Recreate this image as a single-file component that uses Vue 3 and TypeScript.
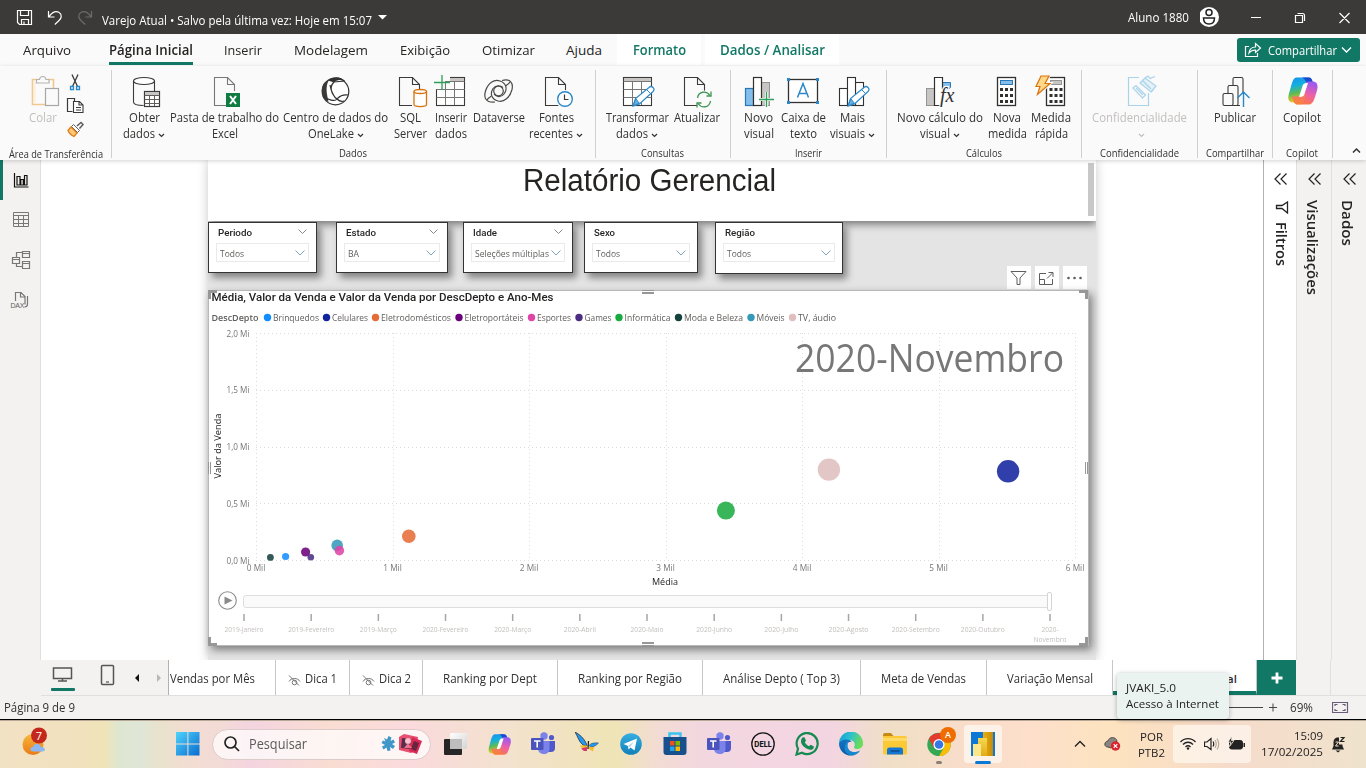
<script setup lang="ts">
import type { Directive } from 'vue'

// Condenses or widens a label so that it fills the given length in pixels.
const vFit: Directive<HTMLElement, number> = {
  mounted(el, binding) {
    if (!(el.textContent || '').trim()) return
    el.style.display = 'inline-block'
    const box = el.getBoundingClientRect()
    if (binding.arg === 'vertical') {
      el.style.height = binding.value + 'px'
      el.style.transformOrigin = '0 0'
      el.style.transform = `scaleY(${(binding.value / box.height).toFixed(4)})`
    } else {
      el.style.width = binding.value + 'px'
      el.style.transformOrigin = '0 0'
      el.style.transform = `scaleX(${(binding.value / box.width).toFixed(4)})`
    }
  },
}

interface Tab { text: string; w: number; gap: number; kind?: string }
const tabs: Tab[] = [
  { text: 'Arquivo', w: 48, gap: 23 },
  { text: 'Página Inicial', w: 84, gap: 38, kind: 'active' },
  { text: 'Inserir', w: 38, gap: 31 },
  { text: 'Modelagem', w: 74, gap: 32 },
  { text: 'Exibição', w: 50, gap: 32 },
  { text: 'Otimizar', w: 53, gap: 32 },
  { text: 'Ajuda', w: 36, gap: 31 },
  { text: 'Formato', w: 53, gap: 15, kind: 'context' },
  { text: 'Dados / Analisar', w: 105, gap: 4, kind: 'context' },
]

const page = (x: number, c = '#3b3a39') =>
  `<path d="M${x + 13} 31.5H${x}V3.5H${x + 13}L${x + 20} 10.5V17M${x + 13} 3.5V10.5H${x + 20}" fill="none" stroke="${c}" stroke-width="1.1"/>`
const grid = (x: number) =>
  `<rect x="${x}" y="3.5" width="28" height="28" fill="#fff" stroke="#3b3a39" stroke-width="1.1"/><path d="M${x + 0.5} 4h27v3.500h-27z" fill="#c8c6c4"/><path d="M${x} 7.500h28M${x} 15.500h28M${x} 23.500h28M${x + 9} 8v23M${x + 18} 8v23" stroke="#797775" fill="none"/>`
const pencil =
  '<path d="M14 32l2.500-7.500L30 13.500a2.800 2.800 0 0 1 4 4L20.500 30z" fill="#fff" stroke="#2b88c8" stroke-width="1.200"/><path d="M14.300 31.700l2.500-7 3.500 4.500z" fill="#69afe5" stroke="#2b88c8"/><path d="M27.500 15.500l4 4" stroke="#2b88c8"/>'
const dots = (x: number) => {
  let s = ''
  for (const r of [14, 20, 26]) for (const c of [0, 5, 10]) s += `<rect x="${x + c}" y="${r}" width="3" height="3" fill="#323130"/>`
  return s
}
const copilotArt = (id: string) => `<defs>
<linearGradient id="${id}a" x1="0" y1="0" x2=".2" y2="1"><stop offset="0" stop-color="#1a8ff0"/><stop offset=".35" stop-color="#12b0e0"/><stop offset=".65" stop-color="#5dbb58"/><stop offset="1" stop-color="#f5c71a"/></linearGradient>
<linearGradient id="${id}b" x1=".6" y1="0" x2=".3" y2="1"><stop offset="0" stop-color="#9a5bf0"/><stop offset=".5" stop-color="#ee5fa8"/><stop offset="1" stop-color="#fb7a3c"/></linearGradient></defs>
<path d="M9.500 1h10.500c3 0 4 1.500 5 5l1 4h-5c-3 0-4 1-5 4l-2.500 8c-.8 2.500-2 4-4 4H5.500C1 26 0 22 1.500 17L4 8C5.500 3.500 6.500 1 9.500 1z" fill="url(#${id}a)"/>
<path d="M16 1h5c3 0 3.600 2 4.500 5l1 4h-6c-2-5-3-8-6-9z" fill="#1b49cf"/>
<path d="M20.500 28H10.500c-3 0-4-1.500-5-5l-1-3h5c3 0 4-1 5-4l2.500-8c.8-2 2-3 4-3h4.500c4 0 5.500 4 4 9L27 22c-1.500 4-3 6-6.500 6z" fill="url(#${id}b)"/>
<path d="M5 20.500h5c2.500 0 3.500-1 4.500-4l1-3 3 5-2 6c-1 2.500-2 3.500-4 3.500h-2c-3 0-4.500-2-5.500-7.500z" fill="#f9863c" opacity=".55"/>
<path d="M11.500 20.500l3.500-11C15.800 7.200 17 6.500 19 6.500h1.500L17 17.500c-.8 2.300-2 3-4 3z" fill="#fff"/>`

const art: Record<string, string> = {
  obter: '<path d="M7.500 7v21c0 2 4 3.500 10 3.500M28.500 7v10" fill="none" stroke="#3b3a39" stroke-width="1.100"/><ellipse cx="18" cy="7" rx="10.500" ry="3.500" fill="#fff" stroke="#3b3a39" stroke-width="1.100"/><rect x="18.500" y="17.500" width="15" height="15" fill="#fff" stroke="#3b3a39" stroke-width="1.200"/><path d="M19 18h14v3H19z" fill="#c8c6c4"/><path d="M18.500 21.500h15M18.500 25.500h15M18.500 29.500h15M23.500 21v11M28.500 21v11" stroke="#605e5c" fill="none"/>',
  excel: page(8.5, '#797775') + '<rect x="20" y="19" width="14" height="14" fill="#107c41"/><path d="M24 22l6 8M30 22l-6 8" stroke="#fff" stroke-width="2"/>',
  lake: '<circle cx="18.500" cy="17.500" r="13.300" fill="#fff" stroke="#323130" stroke-width="1.200"/><path d="M11 6.500C16 2 24 2 28 7c-5-2-9-1-11 1.500z" fill="#323130"/><path d="M12 6C5 8 4 15 5.500 21c1 3 3 6 6 7-1-6-4-15 .5-22z" fill="#3b3a39"/><path d="M17 8c-5 5-3 12 3 17M17 8l11-1M13 11c1 8 6 14 7 14 2-2 4-5 11-4M6 22c5 4 12 6 14 3 2 2 4 3 7 2" fill="none" stroke="#323130" stroke-width="1.200"/>',
  sql: page(7.5) + '<rect x="20" y="15" width="16" height="18" fill="#fafafa"/><path d="M22 17.500v13c0 2.800 12.500 2.800 12.500 0v-13" fill="#fff" stroke="#d8730f" stroke-width="1.300"/><ellipse cx="28.250" cy="17.500" rx="6.250" ry="2" fill="#fff" stroke="#d8730f" stroke-width="1.300"/>',
  inserir: grid(4.5) + '<path d="M3 2h15v5H3z" fill="#fafafa"/><path d="M3 2h10v13H3z" fill="#fafafa"/><path d="M4.500 15.500h28" stroke="#797775"/><path d="M2 8.500h16M10 1v15" stroke="#2e9e58" stroke-width="1.300"/>',
  dataverse: '<g fill="none" stroke="#4b4a48" stroke-width="1.200"><path d="M15 28C6 29 3.500 24 5.500 17 8 9 14 5 20 7c6 2 8 8 4 13-3 4-8 3-10 0"/><path d="M22 6.500c8-2 11.500 2 10 9-2 8-8 13-14 11.500C12 25.500 9.500 20 13 14.500c3-4 8-3 10-1"/><circle cx="18.500" cy="17" r="4.800"/><path d="M7 26c2-3 3-2 4-4M30 8c-2 3-3 2-4 4"/></g>',
  fontes: page(7.5) + '<circle cx="27" cy="25" r="9" fill="#fafafa"/><circle cx="27" cy="25" r="7.300" fill="#fff" stroke="#2b88c8" stroke-width="1.400"/><path d="M26.500 20.500v5h4" fill="none" stroke="#3b3a39" stroke-width="1.200"/>',
  transformar: grid(4.5) + pencil,
  atualizar: page(6.5) + '<circle cx="26" cy="25.500" r="9" fill="#fafafa"/><path d="M19.500 24c1-7 9-7.500 12.500-2.500M32.500 27c-1 7-9 7.500-12.500 2.500" fill="none" stroke="#3e9455" stroke-width="1.300"/><path d="M33 17.500v4.500h-4.500M19 33.500V29h4.500" fill="none" stroke="#3e9455" stroke-width="1.300"/>',
  novo: '<rect x="5.500" y="14.500" width="8" height="17" fill="#83beec" stroke="#2b78b8" stroke-width="1.200"/><rect x="21.500" y="8.500" width="8" height="23" fill="#c8c6c4" stroke="#979593"/><rect x="13.500" y="3.500" width="8" height="28" fill="#fff" stroke="#323130" stroke-width="1.200"/><path d="M19 25.500h15M26.500 18v15" stroke="#fafafa" stroke-width="3"/><path d="M19 25.500h15M26.500 18v15" stroke="#2e9e58" stroke-width="1.300"/>',
  caixa: '<rect x="3.500" y="5.500" width="29" height="23" fill="#fff" stroke="#323130" stroke-width="1.300"/><g fill="#2b88c8"><rect x="2" y="4" width="3" height="3"/><rect x="31" y="4" width="3" height="3"/><rect x="2" y="27" width="3" height="3"/><rect x="31" y="27" width="3" height="3"/></g><path d="M12.500 23.500l5.500-14 5.500 14M14.300 19.500h7.400" fill="none" stroke="#2b88c8" stroke-width="1.500"/>',
  mais: '<g fill="#fff" stroke="#323130" stroke-width="1.100"><rect x="5.500" y="14.500" width="8" height="17"/><rect x="21.500" y="8.500" width="8" height="23"/><rect x="13.500" y="3.500" width="8" height="28"/></g>' + pencil,
  calculo: '<rect x="5.500" y="14.500" width="8" height="17" fill="#c8c6c4" stroke="#979593"/><path d="M21.500 8.500h8v5l-8 6z" fill="#83beec" stroke="#2b78b8"/><path d="M19 31.500h-5.500V3.500h8V15" fill="#fff" stroke="#323130" stroke-width="1.200"/><text x="19" y="28" font-family="Liberation Serif, serif" font-style="italic" font-size="20" stroke="#fafafa" stroke-width="2.500" paint-order="stroke" fill="#323130">fx</text>',
  nova: '<rect x="8.500" y="3.500" width="18" height="28" fill="#fff" stroke="#323130" stroke-width="1.300"/><rect x="11.500" y="6.500" width="12" height="4" fill="#83beec" stroke="#2b78b8"/>' + dots(11),
  medida: '<rect x="13.500" y="3.500" width="18" height="28" fill="#fff" stroke="#323130" stroke-width="1.300"/><rect x="17.500" y="6.500" width="11" height="4" fill="#c8c6c4" stroke="#979593"/>' + dots(16.5) + '<path d="M8 2h8l-4 7.500h5L5.500 20l2.500-8H3z" fill="#fcd888" stroke="#fafafa" stroke-width="3"/><path d="M8 2h8l-4 7.500h5L4.500 20.500l2.500-8H3z" fill="#fcd888" stroke="#d8730f" stroke-width="1.200"/>',
  conf: '<g fill="none" stroke="#a9d3ea" stroke-width="1.200"><path d="M18 3.500H7.500v28h20V19"/><path d="M12 14l3-2.500 9.500 9.500-3 3zM15 14l7 7"/><path d="M19 9l5-5 11 8-5 6zM24 4l3-2 2 2.500 5-2M30 18l3-3M22 7l8 8" fill="#e4f1f8"/></g>',
  publicar: '<g fill="#fafafa" stroke="#3b3a39" stroke-width="1.100"><path d="M17 12V5q0-1.500 1.500-1.500h7Q27 3.500 27 5v15"/><rect x="12" y="11.500" width="10" height="20" rx="1.500"/><rect x="7" y="19.500" width="10" height="12" rx="1.500"/></g><path d="M17 31.500h7" stroke="#3b3a39"/><path d="M27.500 33V18M21.500 24l6-6 6 6" fill="none" stroke="#2b88c8" stroke-width="1.400"/>',
  copilot: `<g transform="translate(3.500 2.500)">${copilotArt('rb')}</g>`,
}

interface Item { icon: string; w: number; lines: [string, number][]; arrow?: boolean; off?: boolean }
interface Group { w: number; pad: number; label: string; lw: number; items: Item[] }
const groups: Group[] = [
  { w: 484, pad: 8, label: 'Dados', lw: 28, items: [
    { icon: 'obter', w: 50, lines: [['Obter', 31], ['dados', 32]], arrow: true },
    { icon: 'excel', w: 111, lines: [['Pasta de trabalho do', 109], ['Excel', 26]] },
    { icon: 'lake', w: 111, lines: [['Centro de dados do', 105], ['OneLake', 46]], arrow: true },
    { icon: 'sql', w: 38, lines: [['SQL', 21], ['Server', 33]] },
    { icon: 'inserir', w: 43, lines: [['Inserir', 32], ['dados', 32]] },
    { icon: 'dataverse', w: 53, lines: [['Dataverse', 52]] },
    { icon: 'fontes', w: 62, lines: [['Fontes', 35], ['recentes', 44]], arrow: true },
  ] },
  { w: 135, pad: 8, label: 'Consultas', lw: 43, items: [
    { icon: 'transformar', w: 68, lines: [['Transformar', 63], ['dados', 32]], arrow: true },
    { icon: 'atualizar', w: 51, lines: [['Atualizar', 46]] },
  ] },
  { w: 156, pad: 10, label: 'Inserir', lw: 27, items: [
    { icon: 'novo', w: 37, lines: [['Novo', 29], ['visual', 30]] },
    { icon: 'caixa', w: 52, lines: [['Caixa de', 45], ['texto', 27]] },
    { icon: 'mais', w: 46, lines: [['Mais', 25], ['visuais', 35]], arrow: true },
  ] },
  { w: 195, pad: 7, label: 'Cálculos', lw: 36, items: [
    { icon: 'calculo', w: 93, lines: [['Novo cálculo do', 86], ['visual', 30]], arrow: true },
    { icon: 'nova', w: 42, lines: [['Nova', 28], ['medida', 39]] },
    { icon: 'medida', w: 46, lines: [['Medida', 40], ['rápida', 33]] },
  ] },
  { w: 116, pad: 1, label: 'Confidencialidade', lw: 79, items: [{ icon: 'conf', w: 115, lines: [['Confidencialidade', 95], ['', 0]], arrow: true, off: true }] },
  { w: 75, pad: 0, label: 'Compartilhar', lw: 58, items: [{ icon: 'publicar', w: 75, lines: [['Publicar', 42]] }] },
  { w: 60, pad: 0, label: 'Copilot', lw: 32, items: [{ icon: 'copilot', w: 60, lines: [['Copilot', 38]] }] },
]

const slicers = [
  { name: 'Periodo', nw: 34, value: 'Todos', vw: 24, w: 109, gap: 0, h: 51, head: true },
  { name: 'Estado', nw: 30, value: 'BA', vw: 11, w: 112, gap: 19, h: 51, head: true },
  { name: 'Idade', nw: 24, value: 'Seleções múltiplas', vw: 74, w: 110, gap: 15, h: 51, head: true },
  { name: 'Sexo', nw: 21, value: 'Todos', vw: 24, w: 114, gap: 11, h: 51, head: false },
  { name: 'Região', nw: 30, value: 'Todos', vw: 24, w: 128, gap: 17, h: 52, head: false },
]

const legend = [
  { n: 'Brinquedos', x: 273, w: 46, c: '#118dff' },
  { n: 'Celulares', x: 332, w: 36, c: '#12239e' },
  { n: 'Eletrodomésticos', x: 381, w: 70, c: '#e66c37' },
  { n: 'Eletroportáteis', x: 464.5, w: 59, c: '#6b007b' },
  { n: 'Esportes', x: 537, w: 34, c: '#e044a7' },
  { n: 'Games', x: 584.5, w: 27, c: '#4b2e83' },
  { n: 'Informática', x: 624.5, w: 46, c: '#1aab40' },
  { n: 'Moda e Beleza', x: 684, w: 59, c: '#15423d' },
  { n: 'Móveis', x: 756.5, w: 28, c: '#3599b8' },
  { n: 'TV, áudio', x: 798, w: 38, c: '#dfbfbf' },
]
const bubbles = [
  { x: 270.4, y: 557.4, r: 3.4, c: '#15423d' },
  { x: 285.6, y: 556.5, r: 3.6, c: '#118dff' },
  { x: 305.6, y: 552, r: 4.6, c: '#6b007b' },
  { x: 310.8, y: 557.3, r: 3.3, c: '#4b2e83' },
  { x: 337.2, y: 545.4, r: 5.8, c: '#3599b8' },
  { x: 339.4, y: 550.6, r: 4.8, c: '#e044a7' },
  { x: 408.8, y: 536.2, r: 6.8, c: '#e66c37' },
  { x: 725.9, y: 510.6, r: 9, c: '#1aab40' },
  { x: 828.9, y: 469.6, r: 11.2, c: '#dfbfbf' },
  { x: 1008.1, y: 471.3, r: 11.2, c: '#12239e' },
]
const yAxis = ['2,0 Mi', '1,5 Mi', '1,0 Mi', '0,5 Mi', '0,0 Mi']
const months = [
  ['2019-Janeiro', 39], ['2019-Fevereiro', 46], ['2019-Março', 37], ['2020-Fevereiro', 46], ['2020-Março', 37], ['2020-Abril', 32],
  ['2020-Maio', 33], ['2020-Junho', 36], ['2020-Julho', 34], ['2020-Agosto', 40], ['2020-Setembro', 48], ['2020-Outubro', 44], ['2020-', 17],
] as [string, number][]
const handles = [
  'M208 290h9v3h-6v6h-3z', 'M1079 290h9v9h-3v-6h-6z', 'M208 637h3v6h6v3h-9z', 'M1085 637h3v9h-9v-3h6z',
  'M642 290h12v1h-12zM642 292h12v2h-12z', 'M642 642h12v2h-12zM642 645h12v1h-12z', 'M208 462h1v12h-1zM210 462h1v12h-1z', 'M1085 462h1v12h-1zM1087 462h1v12h-1z',
]

const sheets = [
  { t: 'Vendas por Mês', w: 107, tw: 85, cls: 'first' },
  { t: 'Dica 1', w: 74, tw: 32, eye: true },
  { t: 'Dica 2', w: 73, tw: 32, eye: true },
  { t: 'Ranking por Dept', w: 135, tw: 94 },
  { t: 'Ranking por Região', w: 145, tw: 104 },
  { t: 'Análise Depto ( Top 3)', w: 158, tw: 117 },
  { t: 'Meta de Vendas', w: 126, tw: 85 },
  { t: 'Variação Mensal', w: 126, tw: 86 },
] as { t: string; w: number; tw: number; eye?: boolean; cls?: string }[]

const teams = '<circle cx="13" cy="4" r="3.700" fill="#7b83eb"/><circle cx="20.500" cy="5.500" r="2.600" fill="#5059c9"/><path d="M16 9h8v7a4 4 0 0 1-4 4h-3z" fill="#5059c9"/><path d="M7 9h11.500v8c0 3.500-2.500 5-5.500 5s-6-2-6-5z" fill="#7b83eb"/><rect x="0" y="6" width="12.500" height="12" rx="1" fill="#4b53bc"/><path d="M3 9h6.500M6.200 9v6.500" stroke="#fff" stroke-width="1.600"/>'
const apps = [
  { id: 'tasks', svg: '<defs><linearGradient id="tv" x1="0" y1="0" x2="1" y2="1"><stop stop-color="#fff"/><stop offset="1" stop-color="#d5d5d5"/></linearGradient></defs><rect x="1" y="7" width="18" height="16" rx="1" fill="#262626"/><rect x="7" y="1" width="17" height="16" rx="1" fill="url(#tv)"/><rect x="7" y="7" width="12" height="10" fill="#bdbdbd"/>' },
  { id: 'copilot', svg: `<g transform="translate(1 1.500) scale(.76)">${copilotArt('tb')}</g>` },
  { id: 'teams', svg: teams },
  { id: 'butterfly', svg: '<path d="M0 0c4 2 9 6 11.500 12l.5 2-4-1C4 10 3 5 0 0z" fill="#2499f2" stroke="#222" stroke-width=".7"/><path d="M14 13.500c2-2.500 5-3 9.500-2.500-2 2-4 4-8 4z" fill="#2499f2" stroke="#222" stroke-width=".4"/><path d="M12 13.500l-7 0c1 2.500 4 4 7 2z" fill="#f9b92a"/><path d="M6 16.500l6-1.500 0 4-3 0z" fill="#d6376b"/><path d="M14 15l5 0-1 4.500-4-2.500z" fill="#f9b92a"/><path d="M13.500 9l-.5 8" stroke="#222" stroke-width="1.200"/>' },
  { id: 'telegram', svg: '<defs><linearGradient id="tg" x2="0" y2="1"><stop stop-color="#37aee2"/><stop offset="1" stop-color="#1280b8"/></linearGradient></defs><circle cx="12" cy="12" r="10.800" fill="url(#tg)"/><path d="M4.500 12L18 6.500l-2.500 12-4-3-2 2-.5-3.500z" fill="#fff"/><path d="M9 14l6-4.500-4 5.500" fill="#a9d3ee"/>' },
  { id: 'store', svg: '<path d="M6.500 6V1.500h11V6" fill="none" stroke="#38c5f2" stroke-width="2.400"/><path d="M.5 5h23v15q0 3-3 3h-17q-3 0-3-3z" fill="#17508c"/><path d="M7 9h4.500v4.500H7z" fill="#f25022"/><path d="M12.500 9H17v4.500h-4.500z" fill="#7fba00"/><path d="M7 14.500h4.500V19H7z" fill="#1fa5ee"/><path d="M12.500 14.500H17V19h-4.500z" fill="#ffb900"/>' },
  { id: 'teams2', svg: teams },
  { id: 'dell', svg: '<circle cx="12" cy="12" r="11.200" fill="none" stroke="#161616" stroke-width="1.300"/><text x="12" y="14.500" text-anchor="middle" font-family="Inter, sans-serif" font-weight="800" font-size="7" textLength="17.500" lengthAdjust="spacingAndGlyphs" fill="#161616">DELL</text>' },
  { id: 'whatsapp', svg: '<path d="M1.500 22.500l1.500-5.800a10.500 10.500 0 1 1 4 4z" fill="none" stroke="#168a52" stroke-width="2.200"/><path d="M7.500 5.500l2-.3 1.500 3.500-1.200 1.600c1 1.900 2.300 3 4.200 3.900l1.700-1.400 3.200 1.600c.3 2.500-2 3.600-3.800 3.400C10 17 6 12.500 6 9.500c0-1.600.6-3.200 1.500-4z" fill="#168a52"/>' },
  { id: 'edge', svg: '<defs><linearGradient id="eg" x1="0" y1="0" x2="1" y2=".3"><stop stop-color="#159bd5"/><stop offset=".5" stop-color="#2bc0d1"/><stop offset="1" stop-color="#6bdc5a"/></linearGradient><linearGradient id="eh" x2="0" y2="1"><stop stop-color="#1274c4"/><stop offset="1" stop-color="#0c59a4"/></linearGradient></defs><path d="M0 12a12 12 0 0 1 24-1c.5 4-3 6-6 6-2.500 0-3.500-1.500-2.500-3 1-3-1-6-6-6C5 8 1 10 0 12z" fill="url(#eg)"/><path d="M0 12c1-5 10-6 13-2-5-1-6 4-3 8 2 2.500 7 3 11 .500C19 22 15 23.500 12 23.500A12 12 0 0 1 0 12z" fill="url(#eh)"/><path d="M9 13c-1 7 6 9 12 5.500-2 3.500-5 5-8 5C5 23 3 14 9 9z" fill="#1b9de2" opacity=".65"/>' },
  { id: 'folder', svg: '<path d="M0 3q0-2 2-2h6l2.500 3H0z" fill="#c58a12"/><path d="M0 4h22q2 0 2 2v15q0 1.500-1.500 1.500h-21Q0 22.500 0 21z" fill="#fbc936"/><path d="M0 6h24v3H0z" fill="#ffda64"/><path d="M4 22.500V18q0-2.500 2.500-2.500h11q2.500 0 2.500 2.500v4.500z" fill="#1477d2"/><path d="M7.500 19h9" stroke="#0c4f94" stroke-width="1.600"/>' },
  { id: 'chrome', svg: '<g transform="translate(0 1)"><circle cx="12" cy="11.500" r="11.700" fill="#34a853"/><path d="M12 11.500L1.900 5.700A11.700 11.700 0 0 1 22.100 5.700z" fill="#e33b2e"/><path d="M1.900 5.700L7 15l5-3.500 3-5.500h7L19 2z" fill="#e33b2e"/><path d="M12 23.200l5-9 .5-8h5A11.700 11.700 0 0 1 12 23.200z" fill="#fbbc05"/><circle cx="12" cy="11.500" r="5.600" fill="#fff"/><circle cx="12" cy="11.500" r="4.300" fill="#3578e5"/></g>' },
  { id: 'powerbi', svg: '<defs><linearGradient id="pa" x2="1"><stop stop-color="#e8b010"/><stop offset="1" stop-color="#c98a08"/></linearGradient><linearGradient id="pb" x2="0" y2="1"><stop stop-color="#f6d751"/><stop offset="1" stop-color="#e2ac16"/></linearGradient></defs><rect width="24" height="24" fill="#0a78d4"/><rect x="12" y="0" width="10" height="24" fill="url(#pa)"/><rect x="7" y="6" width="9" height="18" fill="url(#pb)"/><rect x="2" y="12" width="8" height="12" fill="#fbe68a"/>' },
]
</script>

<template>
  <div class="desktop">
    <header class="titlebar">
      <svg class="t-icons" width="102" height="34" fill="none" stroke="#fff" stroke-width="1.200">
        <path d="M17.500 10.500h14v14h-12l-2-2zM20.500 10.500v5h8v-5M21.500 24.500v-5h7v5M24 21.500v3" />
        <path d="M48.500 11v6h6M48.800 16.800c3-4 7-6 10-4.500 3.500 2 3 6 0 8.500l-4 3.700" />
        <path d="M91.500 11v6h-6M91.200 16.800c-3-4-7-6-10-4.500-3.500 2-3 6 0 8.500l4 3.700" stroke="#6e6c6a" />
      </svg>
      <span v-fit="270" class="t-name">Varejo Atual • Salvo pela última vez: Hoje em 15:07</span>
      <svg class="t-caret" width="10" height="34"><path d="M0 15h9L4.500 19.500z" fill="#fff" /></svg>
      <span class="grow"></span>
      <span v-fit="61" class="t-user">Aluno 1880</span>
      <svg width="166" height="34" fill="none" stroke="#fff" stroke-width="1.200">
        <circle cx="9" cy="17" r="10" fill="#fff" stroke="none" />
        <circle cx="9" cy="12.500" r="3" stroke="#222" stroke-width="1.500" />
        <path d="M3.500 18h11c0 4-2 6-5.500 6s-5.500-2-5.500-6z" stroke="#222" stroke-width="1.500" />
        <path d="M51 17.500h10M95.500 15.500h7v7h-7zM97.500 13.500h5q2 0 2 2v5.500M139.500 13l10 10M149.500 13l-10 10" />
      </svg>
    </header>

    <nav class="tabs">
      <div v-for="t in tabs" :key="t.text" class="tab" :class="t.kind" :style="{ marginLeft: t.gap + 'px' }">
        <span v-fit="t.w">{{ t.text }}</span>
      </div>
      <span class="grow"></span>
      <button class="share">
        <svg width="18" height="18" fill="none" stroke="#fff" stroke-width="1.200"><path d="M5 5.500H1.500v10h12V12M5 12c.5-4 3-6 6.500-6V2.500L16.500 7l-5 4.500V9C8.500 9 6.500 10 5 12z" /></svg>
        <span v-fit="69">Compartilhar</span>
        <svg width="11" height="8" fill="none" stroke="#fff" stroke-width="1.300"><path d="M1 1.500l4.500 4.500L10 1.500" /></svg>
      </button>
    </nav>

    <section class="ribbon">
      <div class="group clip">
        <div class="g-items">
          <svg width="110" height="74" fill="none">
            <path d="M38 5.500h-5.500V30.500H45M48 5.500h5.500V15" stroke="#f2c891" stroke-width="1.600" />
            <path d="M34.500 8v20.500" stroke="#fbeedb" stroke-width="2" />
            <path d="M36.500 9V5.500h3c.5-4 6-4 6.500 0h3V9z" fill="#fafafa" stroke="#b5b3b1" stroke-width="1.200" />
            <rect x="45.500" y="14.500" width="13" height="17" fill="#fafafa" stroke="#a9a7a5" stroke-width="1.200" />
            <path d="M72 .5l5.500 12M78 .5l-5.500 12" stroke="#3b3a39" stroke-width="1.300" />
            <path d="M70.500 12.500h3v3h-3zM76.500 12.500h3v3h-3z" stroke="#2b88c8" stroke-width="1.300" />
            <path d="M72.500 37.500h-5v-13h7v3" stroke="#3b3a39" stroke-width="1.200" />
            <path d="M73.500 27.500h6l3.500 3.500v7.500h-9.500zM79 27.500V31h4M76 33.500h5M76 36h5" fill="#fff" stroke="#3b3a39" stroke-width="1.100" />
            <path d="M77 52l4-3.500 2 2-3.500 4" stroke="#605e5c" stroke-width="1.500" />
            <path d="M73.500 50.500l6 6-2 2-6-6z" fill="#fff" stroke="#605e5c" />
            <path d="M71 53l6 6-3 3.500c-2-1-5-3-6-6z" fill="#fbc978" stroke="#e07c1c" stroke-width="1.300" />
          </svg>
          <span class="colar" v-fit="28">Colar</span>
        </div>
        <div class="g-label"><span v-fit="94">Área de Transferência</span></div>
      </div>
      <div v-for="g in groups" :key="g.label" class="group" :style="{ width: g.w + 'px' }">
        <div class="g-items" :style="{ paddingLeft: g.pad + 'px' }">
          <div v-for="it in g.items" :key="it.icon" class="item" :class="{ off: it.off }" :style="{ width: it.w + 'px' }">
            <svg :width="36 + (it.w % 2)" height="36" v-html="art[it.icon]"></svg>
            <div v-for="(l, i) in it.lines" :key="i" class="line">
              <span v-fit="l[1]">{{ l[0] }}</span>
              <svg v-if="it.arrow && i === 1" class="arr" width="7" height="5" fill="none" stroke="currentColor" stroke-width="1.200"><path d="M1 1l2.500 2.500L6 1" /></svg>
            </div>
          </div>
        </div>
        <div class="g-label"><span v-fit="g.lw">{{ g.label }}</span></div>
      </div>
      <svg class="collapse" width="34" height="26" fill="none" stroke="#323130" stroke-width="1.500"><path d="M21 18.500l3.500-3.500 3.500 3.500" /></svg>
    </section>

    <main class="work">
      <aside class="rail">
        <svg width="40" height="160" viewBox="0 160 40 160" fill="none" stroke="#797775">
          <g stroke="#111" stroke-width="1.200"><path d="M14.500 173v14h14M17 176.500h3v8.500h-3zM20.800 179.500h2.500v5.500h-2.500zM24.500 175.500h2.500v9.500h-2.500z" /></g>
          <path d="M13.500 212.500h15v14h-15zM13.500 215.500h15M13.500 219.500h15M13.500 223.500h15M18.500 215v12M23.500 215v12" />
          <path d="M12.500 257.500h7v6h-7zM12.500 259.500h7M22.500 251.500h7v6h-7zM22.500 253.500h7M22.500 261.500h7v7h-7zM22.500 263.500h7M16.500 257v-4.500h6M16.500 264v2.500h6" stroke-width="1.200" />
          <path d="M15.500 301v-8.500h5.500l4 4v8M20.500 292.500v4.500h4.500M27.500 296v8q0 3-3 3" stroke-width="1.200" />
          <text x="10.500" y="307.500" font-size="7" textLength="14" fill="#605e5c" stroke="none" font-family="Liberation Sans, sans-serif">DAX</text>
        </svg>
      </aside>

      <div class="stage">
        <div class="report">
          <h1><span v-fit="253">Relatório Gerencial</span><i class="scroll"></i></h1>
          <div class="slicers">
            <div v-for="s in slicers" :key="s.name" class="slicer" :style="{ width: s.w + 'px', height: s.h + 'px', marginLeft: s.gap + 'px' }">
              <div class="s-head">
                <span v-fit="s.nw">{{ s.name }}</span>
                <svg v-if="s.head" width="9" height="6" fill="none" stroke="#8a8886"><path d="M.5.5l4 4 4-4" /></svg>
              </div>
              <div class="s-box">
                <span v-fit="s.vw">{{ s.value }}</span>
                <svg width="10" height="6" fill="none" stroke="#7fa4ba"><path d="M.5.5L5 5 9.500.5" /></svg>
              </div>
            </div>
          </div>
          <div class="tools">
            <svg width="24" height="23" fill="none" stroke="#605e5c"><path d="M4 5.500h15l-6 6.500v6.500h-3V12z" /></svg>
            <svg width="24" height="23" fill="none" stroke="#605e5c"><path d="M11 7.500H4.500v11h13V13M12 12.500l5.500-5.500M13.500 6.500H18V11M4.500 13.500h5v5" /></svg>
            <svg width="24" height="23" fill="#605e5c"><circle cx="5.500" cy="12" r="1.300" /><circle cx="11.500" cy="12" r="1.300" /><circle cx="17.500" cy="12" r="1.300" /></svg>
          </div>
          <svg class="chart" width="881" height="356" viewBox="208 290 881 356">
            <path d="M208.500 290.500h880v355h-880z" fill="#fff" stroke="#b8b8b8" />
            <text x="211.500" y="301" class="c-title" textLength="342" lengthAdjust="spacingAndGlyphs">Média, Valor da Venda e Valor da Venda por DescDepto e Ano-Mes</text>
            <text x="211.500" y="321" class="c-leg bold" textLength="47" lengthAdjust="spacingAndGlyphs">DescDepto</text>
            <g v-for="l in legend" :key="l.n">
              <circle :cx="l.x - 5.5" cy="317.500" r="3.700" :fill="l.c" />
              <text :x="l.x" y="321" class="c-leg" :textLength="l.w" lengthAdjust="spacingAndGlyphs">{{ l.n }}</text>
            </g>
            <g stroke="#dcdcdc" stroke-dasharray="1 3" fill="none">
              <path v-for="i in 5" :key="'h' + i" :d="`M256 ${Math.round(333 + (i - 1) * 56.8) + 0.5}H1075`" />
              <path v-for="i in 7" :key="'v' + i" :d="`M${Math.round(256 + (i - 1) * 136.5) + 0.5} 333V560`" />
            </g>
            <text v-for="(y, i) in yAxis" :key="y" x="249.500" :y="336.5 + i * 56.8" class="c-ax" text-anchor="end" textLength="23" lengthAdjust="spacingAndGlyphs">{{ y }}</text>
            <text v-for="i in 7" :key="'x' + i" :x="256 + (i - 1) * 136.5" y="571" class="c-ax" text-anchor="middle" textLength="18.500" lengthAdjust="spacingAndGlyphs">{{ i - 1 }} Mil</text>
            <text x="665" y="584.500" class="c-name" text-anchor="middle" textLength="26" lengthAdjust="spacingAndGlyphs">Média</text>
            <text transform="translate(220.500 446) rotate(-90)" class="c-name" text-anchor="middle" textLength="65" lengthAdjust="spacingAndGlyphs">Valor da Venda</text>
            <text x="795" y="372" class="c-big" textLength="269" lengthAdjust="spacingAndGlyphs">2020-Novembro</text>
            <circle v-for="b in bubbles" :key="b.x" :cx="b.x" :cy="b.y" :r="b.r" :fill="b.c" fill-opacity=".87" />
            <circle cx="227.500" cy="600.500" r="8.800" fill="#fff" stroke="#8a8a8a" stroke-width="1.100" />
            <path d="M224.500 596.500l8 4-8 4z" fill="#8a8a8a" />
            <rect x="243.500" y="595.500" width="808" height="12" rx="2.500" fill="#fafafa" stroke="#dedede" />
            <rect x="1047.500" y="592.500" width="4" height="18" rx="1.500" fill="#fff" stroke="#d4d4d4" />
            <g v-for="(m, i) in months" :key="i">
              <path :d="`M${244 + i * 67.17} 614v7`" stroke="#a6a6a6" stroke-width="1.500" />
              <text :x="244 + i * 67.17" y="632" class="c-mon" text-anchor="middle" :textLength="m[1]" lengthAdjust="spacingAndGlyphs">{{ m[0] }}</text>
            </g>
            <text x="1050" y="641.500" class="c-mon" text-anchor="middle" textLength="33" lengthAdjust="spacingAndGlyphs">Novembro</text>
            <path v-for="h in handles" :key="h" :d="h" fill="#979797" />
          </svg>
        </div>
      </div>

      <aside class="pane filt">
        <svg width="14" height="12" fill="none" stroke="#222" stroke-width="1.200"><path d="M6.500.5L1 6l5.500 5.500M12.500.5L7 6l5.500 5.500" /></svg>
        <svg class="fun" width="14" height="13" fill="none" stroke="#222" stroke-width="1.300"><path d="M12.500 1v11L7 7.500H1.500v-3H7z" /></svg>
        <span v-fit:vertical="44">Filtros</span>
      </aside>
      <aside class="pane">
        <svg width="14" height="12" fill="none" stroke="#222" stroke-width="1.200"><path d="M6.500.5L1 6l5.500 5.500M12.500.5L7 6l5.500 5.500" /></svg>
        <span v-fit:vertical="95">Visualizações</span>
      </aside>
      <aside class="pane">
        <svg width="14" height="12" fill="none" stroke="#222" stroke-width="1.200"><path d="M6.500.5L1 6l5.500 5.500M12.500.5L7 6l5.500 5.500" /></svg>
        <span v-fit:vertical="46">Dados</span>
      </aside>
    </main>

    <div class="sheets">
      <div class="sh-left">
        <svg width="128" height="35" fill="none">
          <rect x="12.500" y="8" width="18" height="10.500" stroke="#555" stroke-width="1.500" />
          <path d="M21.500 18v2.500M17 21h9" stroke="#555" stroke-width="1.500" />
          <rect x="10" y="28" width="24" height="3" rx="1" fill="#117865" />
          <rect x="60.500" y="5.500" width="12" height="19" rx="1" stroke="#555" stroke-width="1.500" />
          <path d="M65 22h3" stroke="#555" stroke-width="1.200" />
          <path d="M98 14v8l-4-4z" fill="#111" /><path d="M116 14v8l4-4z" fill="#b9b7b5" />
        </svg>
      </div>
      <div v-for="s in sheets" :key="s.t" class="sheet" :class="s.cls" :style="{ width: s.w + 'px' }">
        <svg v-if="s.eye" width="13" height="13" fill="none" stroke="#797775"><path d="M1 7.500c2-4 9-4 11 0M1 1.500l10 10" /><circle cx="6.500" cy="8.500" r="2.300" /></svg>
        <span v-fit="s.tw">{{ s.t }}</span>
      </div>
      <div class="sheet current"><span>al</span></div>
      <div class="add"><svg width="12" height="12"><path d="M6 .5v11M.5 6h11" stroke="#fff" stroke-width="2.800" /></svg></div>
      <div class="sh-r1"></div>
      <div class="sh-r2"></div>
    </div>

    <footer class="status">
      <span v-fit="71">Página 9 de 9</span>
      <span class="grow"></span>
      <svg width="60" height="23" fill="none" stroke="#444"><path d="M0 11.500h34M40 11.500h8M44 7.500v8" /></svg>
      <span class="zoom" v-fit="23">69%</span>
      <svg width="34" height="23" fill="none" stroke="#6b5b78" stroke-width="1.200"><path d="M.5 6.500h15v10H.5z" /><path d="M3 10V8.500h2.500M10.500 8.500H13V10M3 13v1.500h2.500M10.500 14.500H13V13" /></svg>
    </footer>

    <div class="taskbar">
      <div class="weather">
        <svg width="30" height="34"><defs><linearGradient id="sun" x1="0" y1="0" x2="0" y2="1"><stop stop-color="#f6b73c" /><stop offset="1" stop-color="#ea7b16" /></linearGradient></defs>
          <circle cx="11" cy="17.500" r="10.500" fill="url(#sun)" /><path d="M11 24.500c-3.500 0-3.500-4.500 0-4.500 1-4.500 7-4.500 8 0 5 0 5 4.500 1.500 4.500z" fill="#8db7f2" />
          <circle cx="17" cy="8.500" r="8" fill="#c4281c" /><text x="17" y="12.500" text-anchor="middle" font-size="11" fill="#fff">7</text></svg>
      </div>
      <svg class="win" width="24" height="24"><defs><linearGradient id="wn" x1="0" y1="0" x2="24" y2="24" gradientUnits="userSpaceOnUse"><stop stop-color="#50d4fb" /><stop offset="1" stop-color="#0669cf" /></linearGradient></defs><path d="M0 0h11.400v11.400H0zM12.400 0H23.500v11.400H12.400zM0 12.400h11.400v11H0zM12.400 12.400h11.100v11H12.400z" fill="url(#wn)" /></svg>
      <div class="search">
        <svg width="16" height="16" fill="none" stroke="#222" stroke-width="1.700"><circle cx="6.500" cy="6.500" r="5.500" /><path d="M10.500 10.500l4.500 4.500" /></svg>
        <span class="s-text" v-fit="58">Pesquisar</span>
        <span class="grow"></span>
        <svg width="44" height="22"><path d="M4 5l3 1.500L8.500 3l3 1.500L10.500 8l3-1.500 1.500 3-3 1.500 3 2-2 3-3-2 .5 3.500-3 .5-1-3.500-3 2-1.500-3 3-1.500L1.500 10 3 7.500l2.500 1z" fill="#3f97c9" />
          <path d="M19 4l5-3 14 3-2 14-5 2-12-3z" fill="#e94f70" /><path d="M22 5l9 1-1 10-9-1z" fill="#5a2b4d" /><path d="M32 4l10 4-5 13-8-3z" fill="#d72a56" /><path d="M34 8l5 2-3 8-5-2z" fill="#692440" /><circle cx="28" cy="8" r="3" fill="#f8c2cb" /><path d="M24 15l4-5 4 5z" fill="#e9738b" /></svg>
      </div>
      <div v-for="a in apps" :key="a.id" class="app" :class="a.id">
        <svg width="24" height="24" v-html="a.svg"></svg>
        <b v-if="a.id === 'chrome'" class="badge">A</b>
      </div>
      <span class="grow"></span>
      <svg class="up" width="12" height="8" fill="none" stroke="#222" stroke-width="1.400"><path d="M1 6.500l5-5 5 5" /></svg>
      <svg class="cloud" width="18" height="16"><path d="M4 11C-.5 11 0 5.500 4 5 5 .5 12 .5 13 5l-6 7z" fill="#8a8580" stroke="#4d4a48" /><circle cx="11.500" cy="10" r="4.700" fill="#d9232e" /><path d="M9.700 8.200l3.600 3.600M13.300 8.200l-3.600 3.600" stroke="#fff" stroke-width="1.200" /></svg>
      <div class="lang"><span v-fit="23">POR</span><span v-fit="27">PTB2</span></div>
      <div class="net">
        <svg width="16" height="14" fill="none" stroke="#222" stroke-width="1.300"><path d="M.5 5c4-4.500 11-4.500 15 0M3 7.500c3-3 7-3 10 0M5.500 10c1.500-1.500 3.500-1.500 5 0" /><circle cx="8" cy="11.500" r="1.200" fill="#222" stroke="none" /></svg>
        <svg width="16" height="14" fill="none" stroke="#222" stroke-width="1.200"><path d="M.5 5h2.500L7 1.500v11L3 9.500H.5zM9 4.500q1.500 2.500 0 5" /><path d="M11 3q2.500 4 0 8M13 1.500q3.500 5.500 0 11" stroke="#b6a99a" /></svg>
        <svg width="17" height="14"><rect x="1.500" y="3.500" width="13" height="8.500" rx="2" fill="#222" stroke="#222" /><path d="M15.500 6h1.500v4h-1.500z" fill="#222" /><path d="M4-1L0 5h3L1.500 9.500 6 3.500H3.500z" fill="#222" stroke="#fdf1e3" stroke-width=".8" /></svg>
      </div>
      <div class="clock"><span v-fit="29">15:09</span><span v-fit="62">17/02/2025</span></div>
      <svg class="bell" width="16" height="17"><path d="M7 1.500C3.500 1.500 2.500 4 2.500 7v3L1 13.500h12L11.500 10V8.500H8V1.500z" fill="#222" /><path d="M4.500 14.500h5l-2.500 2z" fill="#222" /><path d="M9.500 1.500h3.500l-3.500 4h4" fill="none" stroke="#222" stroke-width="1.200" /><path d="M4.500 6h3l-3 4h3" fill="none" stroke="#f6e4c8" /></svg>
    </div>

    <div class="tip"><span v-fit="50">JVAKI_5.0</span><span v-fit="93">Acesso à Internet</span></div>
  </div>
</template>

<style>
html, body { margin: 0; overflow: hidden; background: #f3f2f1; }
</style>

<style scoped>
.desktop { position: relative; width: 1366px; height: 768px; overflow: hidden; display: flex; flex-direction: column; font-family: "Open Sans", "Noto Sans", sans-serif; font-size: 12px; color: #323130; line-height: 16px; }
.desktop span { white-space: nowrap; flex: none; }
.desktop .grow { flex: 1; }
svg { display: block; flex: none; }
.titlebar { height: 34px; flex: none; background: #3b3a39; color: #fff; display: flex; align-items: center; }
.t-name { margin-top: 7px; font-size: 12.300px; }
.t-caret { margin-left: 6px; }
.t-user { margin-right: 11px; margin-top: 1px; }
.tabs { height: 32px; flex: none; background: #fafafa; display: flex; font-size: 13.500px; color: #252423; }
.tab { height: 31px; box-sizing: border-box; padding-top: 8px; }
.active { font-weight: 600; border-bottom: 3px solid #117865; }
.context { background: #fff; color: #117865; font-weight: 600; padding: 8px 15px 0 16px; }
.context + .context { padding: 8px 14px 0 15px; }
.share { height: 24px; width: 123px; margin: 4px 6px 0 0; border: 0; border-radius: 3px; background: #117865; color: #fff; display: flex; align-items: center; padding: 0 0 0 7px; font: 12.500px/16px "Open Sans", sans-serif; }
.share span { margin: 1px 4px 0 6px; }
.ribbon { height: 94px; flex: none; background: #fafafa; display: flex; position: relative; z-index: 3; box-shadow: 0 1px 4px rgba(0, 0, 0, .18); }
.group { box-sizing: border-box; height: 94px; display: flex; flex-direction: column; position: relative; }
.group::after { content: ""; position: absolute; right: -1px; top: 4px; width: 1px; height: 88px; background: #d2d0ce; }
.clip { width: 111px; }
.g-items { box-sizing: border-box; height: 80px; display: flex; }
.clip .g-items { position: relative; padding-top: 8px; }
.colar { position: absolute; left: 29px; top: 44px; color: #c1bfbd; }
.g-label { font-size: 10.500px; line-height: 14px; height: 14px; margin-top: 1px; display: flex; justify-content: center; }
.item { padding-top: 8px; display: flex; flex-direction: column; align-items: center; flex: none; }
.line { height: 16px; display: flex; align-items: center; justify-content: center; white-space: nowrap; font-size: 12.200px; }
.arr { margin: 2px 0 0 3px; }
.off { color: #c1bfbd; }
.collapse { margin-top: 68px; }
.work { height: 500px; flex: none; display: flex; background: #fff; }
.rail { width: 40px; background: #f3f2f1; border-right: 1px solid #e1dfdd; height: 500px; position: relative; }
.rail::before { content: ""; position: absolute; left: 0; top: 0; width: 3px; height: 40px; background: #117865; }
.stage { width: 1222px; height: 500px; overflow: hidden; flex: none; }
.report { width: 888px; height: 500px; margin-left: 167px; background: #e4e4e4; box-shadow: 0 0 10px rgba(0, 0, 0, .22); display: flex; flex-direction: column; }
h1 { margin: 0; height: 61px; flex: none; background: #fff; box-shadow: 0 3px 8px rgba(0, 0, 0, .5); clip-path: inset(0 0 -14px 0); display: flex; justify-content: center; font: 31px/41px "Liberation Sans", Arial, sans-serif; color: #252423; position: relative; }
h1 span { margin-right: 5px; }
.scroll { position: absolute; right: 2px; top: 3px; width: 6px; height: 53px; background: #c8c8c8; }
.slicers { height: 44px; margin-top: 1px; display: flex; flex: none; position: relative; }
.slicer { box-sizing: border-box; border: 1px solid #333; background: #fff; box-shadow: 4px 5px 7px rgba(0, 0, 0, .42); flex: none; padding: 2px 7px 0 7px; color: #252423; }
.s-head { display: flex; height: 16px; align-items: center; justify-content: space-between; padding: 0 2px 0 2px; font: 500 9.800px/16px Roboto, sans-serif; }
.s-head svg { margin-top: -2px; }
.s-box { box-sizing: border-box; height: 19px; margin-top: 2px; border: 1px solid #eaeaea; display: flex; align-items: center; justify-content: space-between; padding: 0 3px; font-size: 9.800px; color: #605e5c; }
.s-box span { margin-top: 2px; }
.tools { height: 24px; flex: none; display: flex; justify-content: flex-end; gap: 4px; padding-right: 9px; position: relative; }
.tools svg { background: #fff; }
.chart { margin: 0; position: relative; filter: drop-shadow(3px 4px 4px rgba(0, 0, 0, .45)); }
.c-title { font: 500 11px Roboto, sans-serif; fill: #252423; }
.c-leg { font: 9.600px "Open Sans", sans-serif; fill: #605e5c; }
.bold { font-weight: 600; }
.c-ax { font: 8.600px "Open Sans", sans-serif; fill: #777; }
.c-name { font: 500 9.300px "Open Sans", sans-serif; fill: #252423; }
.c-big { font: 38px "Open Sans", sans-serif; fill: #777; }
.c-mon { font: 7px "Open Sans", sans-serif; fill: #c2c0be; }
.pane { box-sizing: border-box; width: 35px; height: 500px; background: #f3f2f1; border-left: 1px solid #e1dfdd; display: flex; flex-direction: column; align-items: center; padding: 13px 0 0 1px; font-size: 14.500px; font-weight: 600; color: #252423; }
.pane span { writing-mode: vertical-rl; margin: 15px 5px 0 0; line-height: 18px; }
.pane.filt { width: 33px; background: #fff; border-left: 1px solid #b3b0ad; padding-left: 2px; }
.fun { margin: 16px 0 0 2px; }
.pane.filt span { margin: 8px 1px 0 0; }
.sheets { height: 36px; flex: none; display: flex; background: #f3f2f1; box-sizing: border-box; position: relative; }
.sheets::after { content: ""; position: absolute; left: 41px; right: 0; bottom: 0; height: 1px; background: #e1dfdd; }
.sh-left { width: 127px; padding-left: 41px; border-right: 1px solid #b3b0ad; height: 35px; }
.sheet { box-sizing: border-box; height: 35px; background: #fff; border-right: 1px solid #c8c6c4; display: flex; align-items: center; justify-content: center; gap: 4px; padding-top: 2px; font-size: 12.300px; }
.first { justify-content: flex-start; padding-left: 1px; }
.sheet svg { margin-top: 3px; }
.current { width: 144px; border-bottom: 4px solid #117865; justify-content: flex-end; padding: 6px 19px 0 0; font-size: 11.500px; font-weight: 600; }
.add { width: 39px; height: 35px; background: #117865; display: flex; align-items: center; justify-content: center; }
.sh-r1 { width: 34px; border-right: 1px solid #e1dfdd; height: 35px; }
.status { height: 23px; flex: none; background: #f3f2f1; border-bottom: 1px solid #000; display: flex; align-items: center; padding-left: 4px; font-size: 12.300px; }
.status > span { margin-top: 1px; }
.status > .zoom { margin: 0 19px 0 1px; }
.taskbar { height: 48px; flex: none; display: flex; align-items: center; background: linear-gradient(90deg, #f2e2c4 0, #f1e1bd 80px, #efe4b8 105px, #dfe6cf 118px, #dfe6d8 140px, #e9e2cc 160px, #f2ddd2 185px, #f3dbd6 220px, #f4d4e0 250px, #f9ddd2 330px, #fbdadd 410px, #f7dcd8 440px, #f3e2cd 510px, #efe4b6 615px, #f2dcd2 655px, #f3d7df 700px, #f3d5e2 830px, #f0dfc6 890px, #f8ddca 960px, #fddfcb 1030px, #fde3bf 1110px, #f6dbca 1230px, #efe3cd 1366px); box-shadow: inset 0 1px #b8a898; }
.weather { width: 153px; margin-left: 22px; margin-top: -1px; }
.win { margin-left: 1px; }
.search { box-sizing: border-box; width: 219px; height: 31px; margin: 0 1px 0 12px; border: 1px solid #dccbc9; border-radius: 16px; background: rgba(255, 255, 255, .72); display: flex; align-items: center; padding: 0 6px 0 11px; font-size: 14px; color: #5c5a58; }
.s-text { margin-left: 9px; }
.app { width: 44px; height: 40px; display: flex; align-items: center; justify-content: center; position: relative; flex: none; left: 1px; }
.chrome::after, .powerbi::after { content: ""; position: absolute; bottom: 0; left: 19px; width: 6px; height: 3px; border-radius: 2px; background: #8b8078; }
.powerbi::before { content: ""; position: absolute; inset: 1px 3px; border-radius: 4px; background: #fdf2e8; }
.powerbi svg { position: relative; }
.powerbi::after { left: 14px; width: 16px; background: #0a78d4; }
.badge { position: absolute; left: 23px; top: 3px; width: 16px; height: 16px; border-radius: 8px; background: #ef6c00; color: #fff; font-size: 9px; font-weight: 600; text-align: center; }
.up { margin-right: 18px; }
.cloud { margin-right: 15px; }
.lang { width: 28px; display: flex; flex-direction: column; align-items: center; margin-right: 8px; margin-top: 1px; font-size: 11.500px; color: #222; }
.net { width: 78px; height: 38px; border-radius: 4px; background: rgba(255, 250, 244, .65); display: flex; align-items: center; justify-content: center; gap: 8px; }
.clock { width: 72px; display: flex; flex-direction: column; align-items: flex-end; font-size: 11.500px; color: #222; }
.bell { margin: 0 19px 0 8px; }
.tip { position: absolute; z-index: 5; left: 1117px; top: 673px; width: 112px; height: 46px; box-sizing: border-box; padding: 7px 0 0 9px; border-radius: 4px; background: #ebf3f0; box-shadow: 0 1px 5px rgba(0, 0, 0, .3); display: flex; flex-direction: column; align-items: flex-start; font-size: 11.500px; color: #222; }
</style>
